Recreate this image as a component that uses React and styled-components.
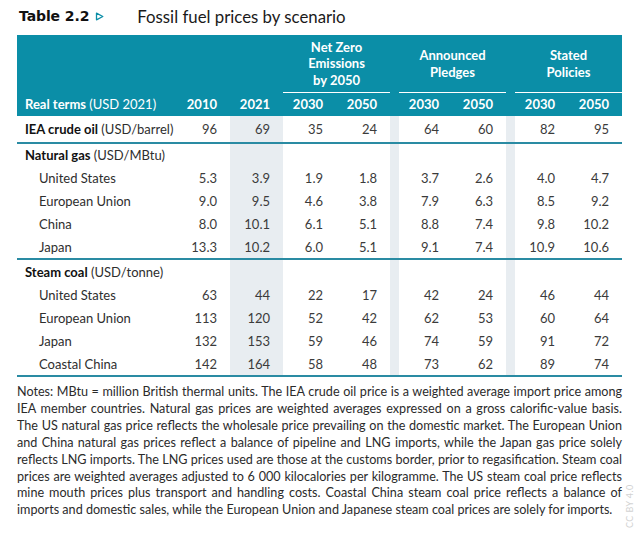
import React from 'react';
import styled, { createGlobalStyle } from 'styled-components';

const GlobalStyle = createGlobalStyle`
  body {
    margin: 0;
    background: #ffffff;
  }
`;

const TEAL = '#0b8ea7';
const BAND = '#e8edf1';

const Page = styled.div`
  position: relative;
  width: 640px;
  height: 533px;
  padding: 0 18px 0 17px;
  box-sizing: border-box;
  overflow: hidden;
  font-family: Lato, 'Liberation Sans', sans-serif;
`;

const TitleBar = styled.div`
  display: flex;
  align-items: center;
  height: 31px;
  padding: 1px 0 0 2px;
  box-sizing: border-box;
`;

const TableNo = styled.span`
  font-family: 'DejaVu Sans', sans-serif;
  font-weight: 700;
  font-size: 14px;
  color: #111;
  letter-spacing: -0.1px;
`;

const Arrow = styled.svg`
  margin: 1px 0 0 6px;
`;

const TitleText = styled.span`
  margin-left: 33px;
  font-size: 16.8px;
  color: #1a1a1a;
`;

const Table = styled.table`
  width: 605px;
  margin-top: 4px;
  table-layout: fixed;
  border-collapse: separate;
  border-spacing: 0;
  font-size: 13px;
`;

const HeadCell = styled.th`
  background: ${TEAL};
  color: #fff;
  font-weight: 700;
  padding: 0;
  text-align: ${(p) => (p.$left ? 'left' : p.$center ? 'center' : 'right')};
  padding-left: ${(p) => (p.$left ? '8px' : '0')};
  padding-right: ${(p) => (p.$left || p.$center ? '0' : '13px')};
  line-height: 16.6px;
  vertical-align: middle;
  border-bottom: ${(p) => (p.$rule ? '1px solid #fff' : '1px solid transparent')};
  height: ${(p) => p.$h}px;
  box-sizing: border-box;
`;

const Light = styled.span`
  font-weight: 400;
`;

const Row = styled.tr`
  height: ${(p) => p.$h}px;
`;

const Cell = styled.td`
  padding: 0 13px 0 0;
  text-align: right;
  color: #3b3b3b;
  background: ${(p) => (p.$band ? BAND : 'transparent')};
  border-bottom: ${(p) => (p.$rule ? '2px solid #2a8ba3' : 'none')};
  box-sizing: border-box;
`;

const LabelCell = styled(Cell)`
  text-align: left;
  padding: 0 0 0 ${(p) => (p.$indent ? 22 : 8)}px;
  color: #2e2e2e;
  white-space: nowrap;
`;

const Strong = styled.span`
  font-weight: 700;
  color: #111;
`;

const Notes = styled.div`
  margin-top: 7px;
  width: 605px;
  font-size: 12.6px;
  line-height: 16.9px;
  color: #2b2b2b;
`;

const NoteLine = styled.span`
  display: block;
  text-align: justify;
  text-align-last: ${(p) => (p.$last ? 'left' : 'justify')};
  white-space: nowrap;
`;

const Licence = styled.div`
  position: absolute;
  left: 624px;
  top: 528px;
  transform-origin: 0 0;
  transform: rotate(-90deg);
  font-size: 9px;
  letter-spacing: 0.4px;
  color: #d2d2d2;
  white-space: nowrap;
`;

const COLS = [160, 53, 53, 53, 54, 9, 53, 54, 9, 53, 54];

const sections = [
  {
    rows: [
      { label: 'IEA crude oil', unit: '(USD/barrel)', h: 26, values: ['96', '69', '35', '24', '64', '60', '82', '95'] },
    ],
  },
  {
    rows: [
      { label: 'Natural gas', unit: '(USD/MBtu)', h: 22 },
      { label: 'United States', values: ['5.3', '3.9', '1.9', '1.8', '3.7', '2.6', '4.0', '4.7'] },
      { label: 'European Union', values: ['9.0', '9.5', '4.6', '3.8', '7.9', '6.3', '8.5', '9.2'] },
      { label: 'China', values: ['8.0', '10.1', '6.1', '5.1', '8.8', '7.4', '9.8', '10.2'] },
      { label: 'Japan', values: ['13.3', '10.2', '6.0', '5.1', '9.1', '7.4', '10.9', '10.6'] },
    ],
  },
  {
    rows: [
      { label: 'Steam coal', unit: '(USD/tonne)' },
      { label: 'United States', values: ['63', '44', '22', '17', '42', '24', '46', '44'] },
      { label: 'European Union', values: ['113', '120', '52', '42', '62', '53', '60', '64'] },
      { label: 'Japan', values: ['132', '153', '59', '46', '74', '59', '91', '72'] },
      { label: 'Coastal China', values: ['142', '164', '58', '48', '73', '62', '89', '74'] },
    ],
  },
];

const notes = [
  'Notes: MBtu = million British thermal units. The IEA crude oil price is a weighted average import price among',
  'IEA member countries. Natural gas prices are weighted averages expressed on a gross calorific-value basis.',
  'The US natural gas price reflects the wholesale price prevailing on the domestic market. The European Union',
  'and China natural gas prices reflect a balance of pipeline and LNG imports, while the Japan gas price solely',
  'reflects LNG imports. The LNG prices used are those at the customs border, prior to regasification. Steam coal',
  'prices are weighted averages adjusted to 6 000 kilocalories per kilogramme. The US steam coal price reflects',
  'mine mouth prices plus transport and handling costs. Coastal China steam coal price reflects a balance of',
  'imports and domestic sales, while the European Union and Japanese steam coal prices are solely for imports.',
];

// value index -> table column (gaps sit at 5 and 8)
const slots = [1, 2, 3, 4, 6, 7, 9, 10];

const DataRow = ({ row, rule }) => {
  const cells = [];
  for (let c = 1; c < COLS.length; c++) {
    const i = slots.indexOf(c);
    const band = c === 2 || c === 5 || c === 8;
    cells.push(
      <Cell key={c} $band={band} $rule={rule}>
        {i >= 0 && row.values ? row.values[i] : ''}
      </Cell>
    );
  }
  const indent = !row.unit;
  return (
    <Row $h={(row.h || 23) + (rule ? 2 : 0)}>
      <LabelCell $indent={indent} $rule={rule}>
        {row.unit ? (
          <>
            <Strong>{row.label}</Strong> {row.unit}
          </>
        ) : (
          row.label
        )}
      </LabelCell>
      {cells}
    </Row>
  );
};

const groups = [
  ['Net Zero', 'Emissions', 'by 2050'],
  ['Announced', 'Pledges'],
  ['Stated', 'Policies'],
];

const App = () => (
  <Page>
    <GlobalStyle />
    <TitleBar>
      <TableNo>Table 2.2</TableNo>
      <Arrow width="9" height="9" viewBox="0 0 9 9">
        <path d="M1.5 1.2 L7.8 4.5 L1.5 7.8 Z" fill="none" stroke={TEAL} strokeWidth="1.3" strokeLinejoin="round" />
      </Arrow>
      <TitleText>Fossil fuel prices by scenario</TitleText>
    </TitleBar>

    <Table>
      <colgroup>
        {COLS.map((w, i) => (
          <col key={i} style={{ width: w }} />
        ))}
      </colgroup>
      <thead>
        <tr>
          <HeadCell colSpan={3} $h={58} />
          {groups.map((g, gi) => (
            <React.Fragment key={gi}>
              {gi > 0 && <HeadCell $h={58} />}
              <HeadCell colSpan={2} $center $rule $h={58}>
                {g.map((line) => (
                  <div key={line}>{line}</div>
                ))}
              </HeadCell>
            </React.Fragment>
          ))}
        </tr>
        <tr>
          <HeadCell $left $h={23}>
            Real terms <Light>(USD 2021)</Light>
          </HeadCell>
          <HeadCell $h={23}>2010</HeadCell>
          <HeadCell $h={23}>2021</HeadCell>
          <HeadCell $h={23}>2030</HeadCell>
          <HeadCell $h={23}>2050</HeadCell>
          <HeadCell $h={23} />
          <HeadCell $h={23}>2030</HeadCell>
          <HeadCell $h={23}>2050</HeadCell>
          <HeadCell $h={23} />
          <HeadCell $h={23}>2030</HeadCell>
          <HeadCell $h={23}>2050</HeadCell>
        </tr>
      </thead>
      <tbody>
        {sections.map((s, si) =>
          s.rows.map((r, ri) => (
            <DataRow key={`${si}-${ri}`} row={r} rule={ri === s.rows.length - 1} />
          ))
        )}
      </tbody>
    </Table>

    <Notes>
      {notes.map((line, i) => (
        <NoteLine key={i} $last={i === notes.length - 1}>
          {line}
        </NoteLine>
      ))}
    </Notes>

    <Licence>CC BY 4.0</Licence>
  </Page>
);

export default App;
